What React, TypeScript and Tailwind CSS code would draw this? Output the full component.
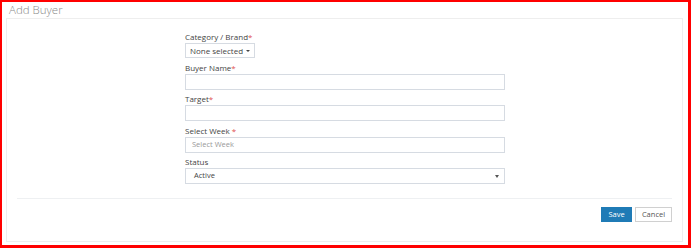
import React from "react";

function Label({ text, star = true, space = false }: { text: string; star?: boolean; space?: boolean }) {
  return (
    <div className="h-[12px] leading-[12px] text-[8px] text-[#444]">
      {text}
      {star && <span className="text-[#e05050]">{space ? " *" : "*"}</span>}
    </div>
  );
}

export default function App() {
  return (
    <div
      className="w-[691px] h-[248px] bg-white border-solid border-[#ff0000] border-t-[2px] border-l-[2px] border-r-[3px] border-b-[3px] box-border overflow-hidden"
      style={{ fontFamily: "'Open Sans', 'Liberation Sans', sans-serif" }}
    >
      <div className="h-[16px] leading-[16px] pl-[7px] text-[11.5px] font-light text-[#8a8a8a]">Add Buyer</div>
      <div className="ml-[4px] w-[677px] h-[224px] border border-[#eeeeee] px-[10px] pt-[12px] box-border">
        <div className="ml-[168px] w-[320px]">
          <div className="mb-[4px]">
            <Label text="Category / Brand" />
            <div className="h-[15px] w-[70px] border border-[#d6dbe2] flex items-center justify-center text-[8px] text-[#444] box-border">
              None selected
              <span className="ml-[3px] inline-block w-0 h-0 border-l-[2px] border-r-[2px] border-t-[2px] border-l-transparent border-r-transparent border-t-[#444]" />
            </div>
          </div>
          <div className="mb-[3px]">
            <Label text="Buyer Name" />
            <div className="h-[16px] w-full border border-[#d6dbe2] box-border" />
          </div>
          <div className="mb-[4px]">
            <Label text="Target" />
            <div className="h-[16px] w-full border border-[#d6dbe2] box-border" />
          </div>
          <div className="mb-[3px]">
            <Label text="Select Week" space />
            <div className="h-[16px] w-full border border-[#d6dbe2] box-border flex items-center pl-[6px] text-[7.5px] text-[#9a9a9a]">
              Select Week
            </div>
          </div>
          <div>
            <Label text="Status" star={false} />
            <div className="h-[16px] w-full border border-[#d6dbe2] box-border flex items-center justify-between pl-[8px] pr-[5px] text-[7.5px] text-[#444]">
              <span>Active</span>
              <span className="inline-block w-0 h-0 border-l-[2px] border-r-[2px] border-t-[3px] border-l-transparent border-r-transparent border-t-[#555]" />
            </div>
          </div>
        </div>
        <div className="mt-[14px] border-t border-[#eef0f2]" />
        <div className="mt-[8px] flex justify-end gap-[3px]">
          <div className="h-[15px] w-[31px] bg-[#1f7bb6] text-white text-[7.5px] flex items-center justify-center">Save</div>
          <div className="h-[15px] w-[37px] border border-[#d0d0d0] bg-white text-[#555] text-[7.5px] flex items-center justify-center box-border">Cancel</div>
        </div>
      </div>
    </div>
  );
}
